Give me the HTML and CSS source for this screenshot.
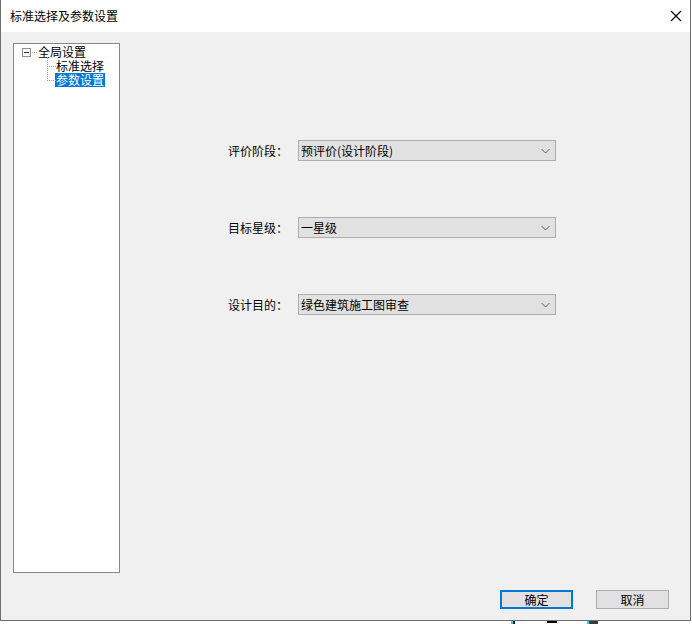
FILE: index.html
```html
<!DOCTYPE html>
<html lang="zh">
<head>
<meta charset="utf-8">
<title>标准选择及参数设置</title>
<link rel="stylesheet" href="styles.css">
</head>
<body>
<div class="window">
  <div class="titlebar">
    <span class="title">标准选择及参数设置</span>
    <svg class="close" width="12" height="12" viewBox="0 0 12 12"><path d="M1 1 L11 11 M11 1 L1 11" stroke="#000" stroke-width="1.1" fill="none"/></svg>
  </div>
  <div class="content">
    <div class="tree">
      <div class="node root">
        <span class="expander"><span class="minus"></span></span><span class="stub"></span><span class="label">全局设置</span>
      </div>
      <div class="children">
        <div class="node child"><span class="label">标准选择</span></div>
        <div class="node child"><span class="label selected">参数设置</span></div>
      </div>
    </div>
    <div class="main">
      <div class="form">
        <div class="row">
          <span class="field-label">评价阶段：</span>
          <div class="combo"><span class="combo-text">预评价(设计阶段)</span><svg class="chev" width="9" height="6" viewBox="0 0 9 6"><path d="M0.5 1 L4.5 5 L8.5 1" stroke="#606060" stroke-width="1" fill="none"/></svg></div>
        </div>
        <div class="row">
          <span class="field-label">目标星级：</span>
          <div class="combo"><span class="combo-text">一星级</span><svg class="chev" width="9" height="6" viewBox="0 0 9 6"><path d="M0.5 1 L4.5 5 L8.5 1" stroke="#606060" stroke-width="1" fill="none"/></svg></div>
        </div>
        <div class="row">
          <span class="field-label">设计目的：</span>
          <div class="combo"><span class="combo-text">绿色建筑施工图审查</span><svg class="chev" width="9" height="6" viewBox="0 0 9 6"><path d="M0.5 1 L4.5 5 L8.5 1" stroke="#606060" stroke-width="1" fill="none"/></svg></div>
        </div>
      </div>
      <div class="buttons">
        <button class="btn default">确定</button>
        <button class="btn">取消</button>
      </div>
    </div>
  </div>
</div>
<div class="desktop">
  <span class="frag f1"></span>
  <span class="frag f2"></span>
  <span class="frag f3"></span>
  <span class="frag f4"></span>
  <span class="frag f5"></span>
</div>
</body>
</html>
```

FILE: styles.css
```css
* { box-sizing: border-box; }
html, body { margin: 0; padding: 0; background: #ffffff; }
body {
  width: 692px;
  height: 624px;
  overflow: hidden;
  font-family: "Noto Sans CJK SC", "Noto Sans", sans-serif;
  font-size: 12px;
  color: #000;
}
.window {
  width: 691px;
  height: 621px;
  border-left: 1px solid #6f6f6f;
  border-right: 1px solid #6f6f6f;
  border-bottom: 1px solid #6f6f6f;
  display: flex;
  flex-direction: column;
  background: #f0f0f0;
}
.titlebar {
  height: 32px;
  flex: none;
  background: #ffffff;
  display: flex;
  align-items: center;
  padding-left: 9px;
  padding-right: 8px;
}
.title { line-height: 14px; font-size: 12px; flex: 1; }
.close { display: block; }
.content {
  flex: 1;
  display: flex;
  min-height: 0;
}
.tree {
  margin-left: 12px;
  margin-top: 11px;
  width: 107px;
  height: 530px;
  background: #ffffff;
  border: 1px solid #828790;
  padding-top: 1px;
  flex: none;
}
.node {
  height: 14px;
  display: flex;
  align-items: center;
  white-space: nowrap;
}
.root { padding-left: 8px; }
.expander {
  width: 9px;
  height: 9px;
  border: 1px solid #919191;
  background: #ffffff;
  display: flex;
  align-items: center;
  justify-content: center;
  flex: none;
}
.minus { width: 5px; height: 1px; background: #1f3a70; }
.stub {
  width: 5px;
  border-top: 1px dotted #a0a0a0;
  margin-left: 1px;
}
.label { padding: 0 1px; line-height: 13px; height: 14px; display: block; }
.children { margin-left: 33px; }
.child { position: relative; padding-left: 8px; }
.child::before {
  content: "";
  position: absolute;
  left: 0;
  width: 8px;
  border-left: 1px dotted #a0a0a0;
  border-bottom: 1px dotted #a0a0a0;
}
.child:nth-child(1)::before { top: -2px; height: 9px; }
.child:nth-child(2)::before { top: -7px; height: 14px; }
.selected { background: #0078d7; color: #ffffff; }
.main {
  flex: 1;
  display: flex;
  flex-direction: column;
  padding-bottom: 11px;
}
.form {
  padding-top: 108px;
  padding-left: 108px;
  display: flex;
  flex-direction: column;
  gap: 56px;
}
.row { display: flex; align-items: center; height: 21px; }
.field-label { width: 70px; flex: none; }
.combo {
  width: 258px;
  height: 21px;
  border: 1px solid #adadad;
  background: #e1e1e1;
  display: flex;
  align-items: center;
  padding-left: 2px;
  padding-right: 5px;
}
.combo-text { flex: 1; line-height: 14px; }
.chev { display: block; }
.buttons {
  margin-top: auto;
  display: flex;
  justify-content: flex-end;
  gap: 23px;
  padding-right: 21px;
}
.btn {
  width: 73px;
  height: 19px;
  font-family: inherit;
  font-size: 12px;
  line-height: 14px;
  color: #000;
  background: #e1e1e1;
  border: 1px solid #adadad;
  padding: 0;
  margin: 0;
}
.btn.default { border: 2px solid #0078d7; }
.desktop {
  position: relative;
  height: 3px;
  background: #ffffff;
}
.frag { position: absolute; top: 0; height: 3px; }
.f1 { left: 511px; width: 2px; background: #00e5ee; }
.f2 { left: 513px; width: 2px; background: #000; }
.f3 { left: 547px; width: 10px; height: 2px; background: #000; }
.f4 { left: 587px; width: 2px; background: #00e5ee; }
.f5 { left: 589px; width: 9px; background: #3a3a3a; }
```
